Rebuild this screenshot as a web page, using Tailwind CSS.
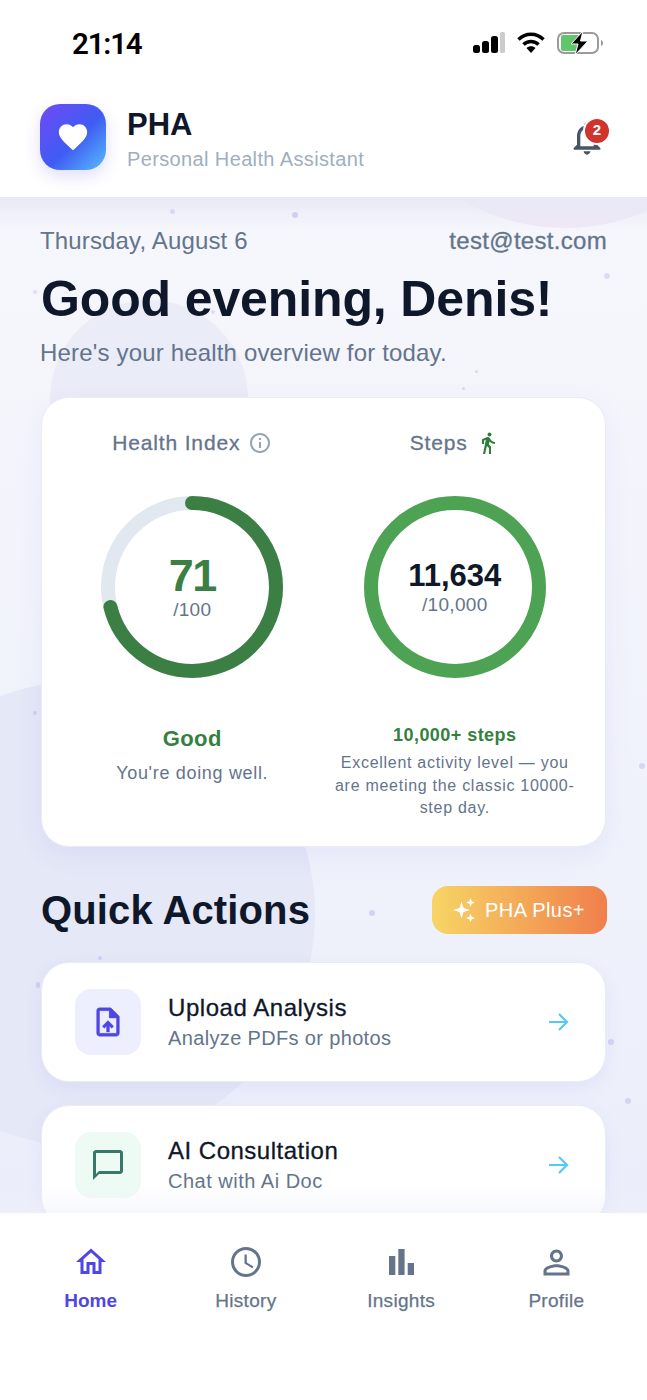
<!DOCTYPE html>
<html lang="en">
<head>
    <meta charset="UTF-8">
    <meta name="viewport" content="width=device-width, initial-scale=1.0">
    <title>PHA</title>
    <script src="https://cdn.jsdelivr.net/npm/@tailwindcss/browser@4"></script>
</head>
<body class="bg-white font-['Liberation_Sans',sans-serif]">
    <div class="w-[647px] h-[1400px] flex flex-col overflow-hidden">
        <!-- Status bar + header -->
        <header class="relative z-10 h-[197px] shrink-0 bg-white">
            <div class="h-[86px] pl-[72px] pr-[44px] flex items-center justify-between">
                <span class="font-['Roboto',sans-serif] text-[29.500px] font-semibold text-black tracking-[-1.200px] translate-y-[1px]">21:14</span>
                <div class="flex items-center gap-[12px]">
                    <svg width="32" height="22" viewBox="0 0 32 22">
                        <rect x="0" y="13" width="7" height="8" rx="2.500" fill="#000"/>
                        <rect x="9" y="9" width="7" height="12" rx="2.500" fill="#000"/>
                        <rect x="18" y="4" width="7" height="17" rx="2.500" fill="#000"/>
                        <rect x="27" y="0" width="5" height="21" rx="1.500" fill="#ccc"/>
                    </svg>
                    <svg width="28" height="22" viewBox="0 0 28 22">
                        <path d="M1.500 7.500C8.500 .5 19.500 .5 26.500 7.500" fill="none" stroke="#000" stroke-width="3.400"/>
                        <path d="M6.500 12.500C10.500 8.500 17.500 8.500 21.500 12.500" fill="none" stroke="#000" stroke-width="3.400"/>
                        <path d="M9.500 16L14 21l4.500-5c-2.500-2.300-6.500-2.300-9 0z" fill="#000"/>
                    </svg>
                    <svg width="46" height="24" viewBox="0 0 46 24">
                        <rect x="1" y="2" width="40" height="20" rx="6" fill="none" stroke="#9a9a9a" stroke-width="2"/>
                        <path d="M6 4h16l-2 16H6a2 2 0 0 1-2-2V6a2 2 0 0 1 2-2z" fill="#5fc66c"/>
                        <path d="M44 9v6c1.500-.5 2-1.500 2-3s-.5-2.500-2-3z" fill="#9a9a9a"/>
                        <path d="M26 0L14 13h7l-3 11 13-14h-7.500z" fill="#000" stroke="#fff" stroke-width="1"/>
                    </svg>
                </div>
            </div>
            <div class="flex items-center pl-10 pr-[40px] mt-[18px] -translate-y-[1px]">
                <div class="w-[66px] h-[66px] rounded-[20px] bg-[linear-gradient(135deg,#7049f5_0%,#3f5cf2_55%,#58bdff_100%)] shadow-[0_6px_16px_rgba(79,70,229,0.18)] flex items-center justify-center">
                    <svg width="34" height="34" viewBox="0 0 24 24" fill="#fff"><path d="M12 21.350l-1.450-1.320C5.400 15.360 2 12.280 2 8.500 2 5.420 4.420 3 7.500 3c1.740 0 3.410.81 4.500 2.090C13.090 3.810 14.760 3 16.500 3 19.580 3 22 5.420 22 8.500c0 3.780-3.400 6.860-8.550 11.540z"/></svg>
                </div>
                <div class="ml-[21px] flex-1 translate-y-[1px]">
                    <div class="text-[31px] leading-[38px] font-bold text-[#0f172a] mt-[2px]">PHA</div>
                    <div class="text-[20px] leading-[24px] mt-[3px] text-[#a0aec0] tracking-[0.37px]">Personal Health Assistant</div>
                </div>
                <div class="relative w-[42px] h-[42px] flex items-center justify-center translate-x-[1px] translate-y-[1px]">
                    <svg width="40" height="40" viewBox="0 0 24 24" fill="#475569"><path d="M12 22c1.100 0 2-.9 2-2h-4c0 1.100.9 2 2 2zm6-6v-5c0-3.070-1.630-5.640-4.500-6.320V4c0-.83-.67-1.500-1.500-1.500s-1.500.67-1.500 1.500v.68C7.640 5.360 6 7.920 6 11v5l-2 2v1h16v-1l-2-2zm-2 1H8v-6c0-2.480 1.510-4.500 4-4.500s4 2.020 4 4.500v6z"/></svg>
                    <span class="absolute right-[-1px] top-[2px] w-[24px] h-[24px] rounded-full bg-[#d0342c] ring-2 ring-white text-white text-[15px] font-bold flex items-center justify-center">2</span>
                </div>
            </div>
        </header>

        <!-- Main scroll area -->
        <main class="relative flex-1 min-h-0 overflow-hidden bg-[linear-gradient(180deg,#f6f7fc_0%,#f0f2fb_60%,#ebeefa_100%)] px-10">
            <!-- Background shapes -->
            <div class="absolute left-[50px] top-[103px] w-[198px] h-[198px] rounded-full bg-[#eaecf8]"></div>
            <div class="absolute left-[-150px] top-[484px] w-[465px] h-[465px] rounded-full bg-[#e5e8f7]"></div>
            <div class="absolute left-[358px] top-[-383px] w-[414px] h-[414px] rounded-full bg-[#efe8f6]"></div>
            <div class="absolute left-0 right-0 top-0 h-[34px] bg-linear-to-b from-[#e9e9f6] to-[#e9e9f6]/0"></div>
            <!-- Dots -->
            <div class="absolute left-[170px] top-[12px] w-[5px] h-[5px] rounded-full bg-[#d8d6f3]"></div>
            <div class="absolute left-[292px] top-[15px] w-[6px] h-[6px] rounded-full bg-[#cfcff2]"></div>
            <div class="absolute left-[33px] top-[93px] w-[4px] h-[4px] rounded-full bg-[#dcdcf5]"></div>
            <div class="absolute left-[211px] top-[113px] w-[4px] h-[4px] rounded-full bg-[#dcdcf5]"></div>
            <div class="absolute left-[604px] top-[76px] w-[6px] h-[6px] rounded-full bg-[#dcdcf3]"></div>
            <div class="absolute left-[475px] top-[173px] w-[3px] h-[3px] rounded-full bg-[#d8d8f2]"></div>
            <div class="absolute left-[462px] top-[190px] w-[3px] h-[3px] rounded-full bg-[#d8d8f2]"></div>
            <div class="absolute left-[33px] top-[514px] w-[4px] h-[4px] rounded-full bg-[#cfcff2]"></div>
            <div class="absolute left-[639px] top-[566px] w-[6px] h-[6px] rounded-full bg-[#d6d6f3]"></div>
            <div class="absolute left-[369px] top-[713px] w-[6px] h-[6px] rounded-full bg-[#d3d3f2]"></div>
            <div class="absolute left-[443px] top-[696px] w-[4px] h-[4px] rounded-full bg-[#d8d8f2]"></div>
            <div class="absolute left-[608px] top-[842px] w-[6px] h-[6px] rounded-full bg-[#d3d3f2]"></div>
            <div class="absolute left-[625px] top-[901px] w-[6px] h-[6px] rounded-full bg-[#d3d3f2]"></div>
            <div class="absolute left-[98px] top-[759px] w-[4px] h-[4px] rounded-full bg-[#cfcff2]"></div>
            <div class="absolute left-[36px] top-[785px] w-[4px] h-[6px] rounded-full bg-[#cfcff2]"></div>

            <div class="relative">
                <!-- Greeting -->
                <div class="flex justify-between items-center mt-[29px] text-[24px] leading-[30px]">
                    <span class="text-[#64748b] tracking-[0.15px]">Thursday, August 6</span>
                    <span class="text-[#64748b] [-webkit-text-stroke:0.3px_#64748b] tracking-[0.3px]">test@test.com</span>
                </div>
                <h1 class="mt-[13px] ml-[1px] text-[50px] leading-[60px] font-bold text-[#0f172a] tracking-[-0.13px]">Good evening, Denis!</h1>
                <p class="mt-[9px] text-[24px] leading-[30px] text-[#64748b] tracking-[0.17px]">Here's your health overview for today.</p>

                <!-- Metrics card -->
                <section class="mx-[1px] mt-[29px] h-[450px] rounded-[28px] bg-white border border-[#e9ebf5] shadow-[0_8px_28px_rgba(79,70,229,0.07)] grid grid-cols-2 px-[19px] pt-[30px]">
                    <div class="flex flex-col items-center">
                        <div class="flex items-center gap-[8px] h-[30px] text-[21px] text-[#64748b] [-webkit-text-stroke:0.3px_#64748b] tracking-[0.85px]">
                            Health Index
                            <svg width="24" height="24" viewBox="0 0 24 24" fill="#94a3b8"><path d="M11 7h2v2h-2zm0 4h2v6h-2zm1-9C6.480 2 2 6.480 2 12s4.480 10 10 10 10-4.480 10-10S17.520 2 12 2zm0 18c-4.410 0-8-3.590-8-8s3.590-8 8-8 8 3.590 8 8-3.590 8-8 8z"/></svg>
                        </div>
                        <div class="relative mt-[38px] w-[182px] h-[182px]">
                            <svg width="182" height="182" viewBox="0 0 182 182" class="-rotate-90">
                                <circle cx="91" cy="91" r="84" fill="none" stroke="#e2e8f0" stroke-width="14"/>
                                <circle cx="91" cy="91" r="84" fill="none" stroke="#3b7f45" stroke-width="14" stroke-linecap="round" stroke-dasharray="375 528"/>
                            </svg>
                            <div class="absolute inset-0 flex flex-col items-center justify-center">
                                <span class="text-[45px] leading-[46px] font-bold text-[#3b7f45] tracking-[-1.500px]">71</span>
                                <span class="text-[19px] leading-[22px] text-[#64748b] tracking-[0.3px]">/100</span>
                            </div>
                        </div>
                        <div class="mt-[47px] text-[22px] leading-[28px] font-bold text-[#35803f] tracking-[0.4px]">Good</div>
                        <div class="mt-[8px] text-[18px] leading-[24px] text-[#64748b] tracking-[0.68px]">You're doing well.</div>
                    </div>
                    <div class="flex flex-col items-center">
                        <div class="flex items-center gap-[8px] h-[30px] text-[21px] text-[#64748b] [-webkit-text-stroke:0.3px_#64748b] tracking-[0.85px]">
                            Steps
                            <svg width="24" height="24" viewBox="0 0 24 24" fill="#2f7d3b"><path d="M13.500 5.500c1.100 0 2-.9 2-2s-.9-2-2-2-2 .9-2 2 .9 2 2 2zM9.800 8.900L7 23h2.100l1.800-8 2.100 2v6h2v-7.500l-2.100-2 .6-3C14.800 12 16.800 13 19 13v-2c-1.900 0-3.500-1-4.300-2.400l-1-1.600c-.4-.6-1-1-1.700-1-.3 0-.5.1-.8.1L6 8.300V13h2V9.600l1.800-.7"/></svg>
                        </div>
                        <div class="relative mt-[38px] w-[182px] h-[182px]">
                            <svg width="182" height="182" viewBox="0 0 182 182">
                                <circle cx="91" cy="91" r="84" fill="none" stroke="#4ea254" stroke-width="14"/>
                            </svg>
                            <div class="absolute inset-0 flex flex-col items-center justify-center">
                                <span class="text-[31px] leading-[36px] font-bold text-[#0f172a]">11,634</span>
                                <span class="text-[19px] leading-[24px] mt-[-1px] text-[#64748b] tracking-[0.3px]">/10,000</span>
                            </div>
                        </div>
                        <div class="mt-[45px] text-[18px] leading-[24px] font-bold text-[#35803f] tracking-[0.45px]">10,000+ steps</div>
                        <div class="mt-[5px] text-[16px] leading-[22.500px] text-[#64748b] text-center tracking-[0.72px]">Excellent activity level — you<br>are meeting the classic 10000-<br>step day.</div>
                    </div>
                </section>

                <!-- Quick actions -->
                <div class="flex justify-between items-center mt-[38px]">
                    <h2 class="ml-[1px] pt-[1px] text-[40px] leading-[48px] font-bold text-[#0f172a] tracking-[0.12px]">Quick Actions</h2>
                    <button class="w-[175px] h-[48px] rounded-[16px] bg-[linear-gradient(90deg,#f7d565_0%,#f07f4c_100%)] flex items-center justify-center gap-[9px] text-white text-[20px] tracking-[0.4px] pr-[2px]">
                        <svg width="24" height="24" viewBox="0 0 24 24" fill="#fff"><path d="M9.500 3.500l2.100 6.400 6.400 2.100-6.400 2.100-2.100 6.400-2.100-6.400L1 12l6.400-2.100z"/><path d="M18.500 0l1.200 3.300 3.300 1.200-3.300 1.200-1.200 3.300-1.200-3.300L14 4.500l3.300-1.200z"/><path d="M18.500 15.500l1.200 3.300 3.300 1.200-3.300 1.200-1.200 2.800-1.200-2.800L14 20l3.300-1.200z"/></svg>
                        PHA Plus+
                    </button>
                </div>

                <div class="mx-[1px] mt-[28px] h-[120px] rounded-[28px] bg-white border border-[#e9ebf5] shadow-[0_6px_18px_rgba(79,70,229,0.07)] flex items-center pl-[33px] pr-[35px]">
                    <div class="w-[66px] h-[66px] rounded-[16px] bg-[#eeeffe] flex items-center justify-center">
                        <svg width="34" height="34" viewBox="0 0 24 24" fill="#4f46e5" stroke="#4f46e5" stroke-width="0.300"><path d="M14 2H6c-1.100 0-1.990.9-1.990 2L4 20c0 1.100.89 2 1.990 2H18c1.100 0 2-.9 2-2V8l-6-6zm4 18H6V4h7v5h5v11zM8 15.010l1.410 1.410L11 14.840V19h2v-4.160l1.590 1.590L16 15.010 12.010 11 8 15.010z"/><path d="M13 3h1l5 5v1h-6z"/></svg>
                    </div>
                    <div class="ml-[27px] flex-1">
                        <div class="text-[24px] leading-[30px] text-[#0f172a] [-webkit-text-stroke:0.3px_#0f172a] tracking-[0.55px]">Upload Analysis</div>
                        <div class="mt-[2px] text-[20px] leading-[26px] text-[#64748b] tracking-[0.35px]">Analyze PDFs or photos</div>
                    </div>
                    <svg width="24" height="24" viewBox="0 0 24 24" fill="none" stroke="#55c8f8" stroke-width="2.200"><path d="M3 12h18M13 4l8 8-8 8"/></svg>
                </div>

                <div class="mx-[1px] mt-[23px] h-[120px] rounded-[28px] bg-white border border-[#e9ebf5] shadow-[0_6px_18px_rgba(79,70,229,0.07)] flex items-center pl-[33px] pr-[35px]">
                    <div class="w-[66px] h-[66px] rounded-[16px] bg-[#eefbf5] flex items-center justify-center">
                        <svg width="36" height="36" viewBox="0 0 24 24" fill="#37786b"><path d="M20 2H4c-1.100 0-2 .9-2 2v18l4-4h14c1.100 0 2-.9 2-2V4c0-1.100-.9-2-2-2zm0 14H6l-2 2V4h16v12z"/></svg>
                    </div>
                    <div class="ml-[27px] flex-1">
                        <div class="text-[24px] leading-[30px] text-[#0f172a] [-webkit-text-stroke:0.3px_#0f172a] tracking-[0.5px]">AI Consultation</div>
                        <div class="mt-[2px] text-[20px] leading-[26px] text-[#64748b] tracking-[0.5px]">Chat with Ai Doc</div>
                    </div>
                    <svg width="24" height="24" viewBox="0 0 24 24" fill="none" stroke="#55c8f8" stroke-width="2.200"><path d="M3 12h18M13 4l8 8-8 8"/></svg>
                </div>
            </div>

            <!-- Fade above the tab bar -->
            <div class="absolute left-0 right-0 bottom-0 h-[28px] bg-linear-to-b from-[#eef0fa]/0 to-[#eef0fa]/50"></div>
        </main>

        <!-- Bottom nav -->
        <nav class="h-[187px] shrink-0 bg-white grid grid-cols-4 px-[13px] pt-[29px] content-start">
            <div class="flex flex-col items-center text-[#4f46e5]">
                <div class="h-[40px] flex items-center"><svg width="36" height="36" viewBox="0 0 24 24" fill="currentColor"><path d="M12 5.690l5 4.500V18h-2v-6H9v6H7v-7.810l5-4.500M12 3L2 12h3v8h6v-6h2v6h6v-8h3L12 3z"/></svg></div>
                <span class="mt-[7px] text-[19px] leading-[24px] font-bold">Home</span>
            </div>
            <div class="flex flex-col items-center text-[#64748b]">
                <div class="h-[40px] flex items-center"><svg width="36" height="36" viewBox="0 0 24 24" fill="currentColor"><path d="M11.990 2C6.470 2 2 6.480 2 12s4.470 10 9.990 10C17.520 22 22 17.520 22 12S17.520 2 11.990 2zM12 20c-4.420 0-8-3.580-8-8s3.580-8 8-8 8 3.580 8 8-3.580 8-8 8zm.5-13H11v6l5.250 3.150.75-1.230-4.500-2.670z"/></svg></div>
                <span class="mt-[7px] text-[19px] leading-[24px] [-webkit-text-stroke:0.25px_#64748b] tracking-[0.3px]">History</span>
            </div>
            <div class="flex flex-col items-center text-[#64748b]">
                <div class="h-[40px] flex items-center"><svg width="25" height="26" viewBox="0 0 25 26" fill="currentColor"><rect x="0" y="7" width="6.300" height="19"/><rect x="9.300" y="0" width="6.300" height="26"/><rect x="18.700" y="14" width="6.300" height="12"/></svg></div>
                <span class="mt-[7px] text-[19px] leading-[24px] [-webkit-text-stroke:0.25px_#64748b] tracking-[0.3px]">Insights</span>
            </div>
            <div class="flex flex-col items-center text-[#64748b]">
                <div class="h-[40px] flex items-center"><svg width="39" height="39" viewBox="0 0 24 24" fill="currentColor"><path d="M12 5.900c1.160 0 2.100.94 2.100 2.100s-.94 2.100-2.100 2.100S9.900 9.160 9.900 8s.94-2.100 2.100-2.100m0 9c2.970 0 6.100 1.460 6.100 2.100v1.100H5.900V17c0-.64 3.130-2.100 6.100-2.100M12 4C9.790 4 8 5.790 8 8s1.790 4 4 4 4-1.790 4-4-1.790-4-4-4zm0 9c-2.670 0-8 1.340-8 4v3h16v-3c0-2.660-5.330-4-8-4z"/></svg></div>
                <span class="mt-[7px] text-[19px] leading-[24px] [-webkit-text-stroke:0.25px_#64748b] tracking-[0.3px]">Profile</span>
            </div>
        </nav>
    </div>
</body>
</html>
